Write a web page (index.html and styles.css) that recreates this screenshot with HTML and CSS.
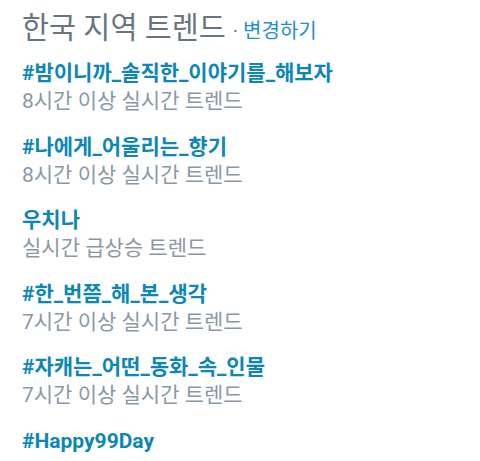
FILE: index.html
```html
<!DOCTYPE html>
<html lang="ko">
<head>
<meta charset="utf-8">
<link rel="stylesheet" href="styles.css">
</head>
<body>
<div class="trends">
  <div class="header">
    <h3 class="title">한국 지역 트렌드</h3>
    <span class="dot">·</span>
    <a class="change">변경하기</a>
  </div>
  <ul class="list">
    <li class="item"><a class="name">#밤이니까_솔직한_이야기를_해보자</a><div class="meta">8시간 이상 실시간 트렌드</div></li>
    <li class="item"><a class="name">#나에게_어울리는_향기</a><div class="meta">8시간 이상 실시간 트렌드</div></li>
    <li class="item"><a class="name">우치나</a><div class="meta">실시간 급상승 트렌드</div></li>
    <li class="item"><a class="name">#한_번쯤_해_본_생각</a><div class="meta">7시간 이상 실시간 트렌드</div></li>
    <li class="item"><a class="name">#자캐는_어떤_동화_속_인물</a><div class="meta">7시간 이상 실시간 트렌드</div></li>
    <li class="item"><a class="name">#Happy99Day</a></li>
  </ul>
</div>
</body>
</html>
```
FILE: styles.css
```css
html, body {
  margin: 0;
  padding: 0;
  background: #ffffff;
}
body {
  font-family: Roboto, "Noto Sans CJK KR", sans-serif;
}
.trends {
  padding: 8px 0 0 22px;
}
.header {
  display: flex;
  align-items: baseline;
  gap: 5px;
}
.title {
  margin: 0 2px 0 0;
  font-size: 29.4px;
  font-weight: 400;
  color: #66757f;
  line-height: 40px;
}
.dot {
  font-size: 20px;
  color: #66757f;
}
.change {
  font-size: 20px;
  color: #1b8fd2;
}
.list {
  list-style: none;
  margin: 11px 0 0;
  padding: 0;
  display: flex;
  flex-direction: column;
  gap: 17.6px;
}
.item {
  display: flex;
  flex-direction: column;
}
.name {
  font-size: 21px;
  font-weight: 700;
  color: #0d86b8;
  line-height: 28px;
}
.meta {
  font-size: 21px;
  color: #8a98a5;
  line-height: 28px;
}
```
